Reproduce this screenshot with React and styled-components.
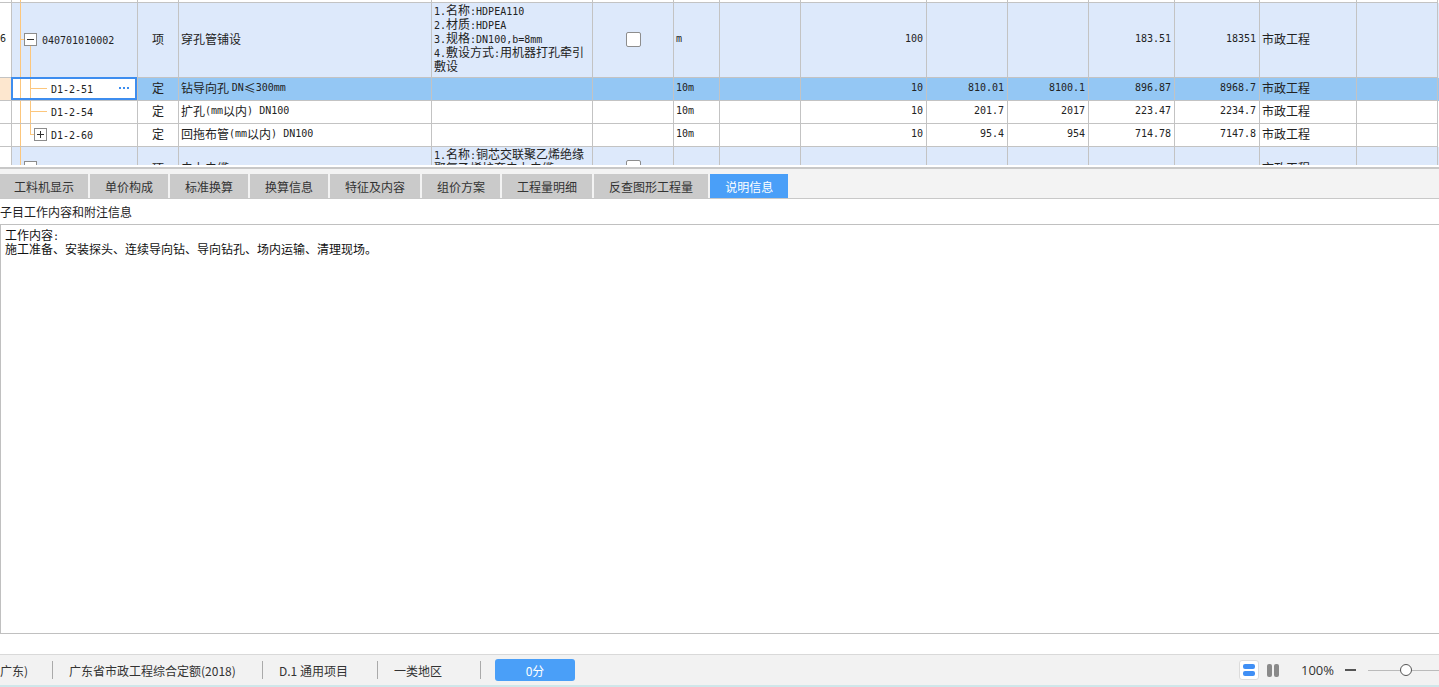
import React from 'react';
import styled, { createGlobalStyle } from 'styled-components';

const GlobalStyle = createGlobalStyle`
  html, body {
    margin: 0;
    padding: 0;
    background: #fff;
    overflow: hidden;
  }
  body {
    font-family: "Noto Sans CJK SC", "Noto Sans", sans-serif;
    font-size: 12px;
    color: #222;
  }
`;

const LINE = '#c3c3c3';
const ORANGE = '#fcc67c';
const BLUE = '#4a9ff8';
const COLS = '12px 126px 41px 253px 161px 81px 46px 81px 126px 81px 81px 86px 85px 97px 81px';

const Page = styled.div`
  width: 1439px;
  height: 687px;
  display: flex;
  flex-direction: column;
`;

const GridViewport = styled.div`
  height: 165px;
  overflow: hidden;
  flex: none;
`;

const Row = styled.div`
  display: grid;
  grid-template-columns: ${COLS};
  height: ${(p) => p.$h}px;
  background: ${(p) => p.$bg || '#fff'};
`;

const Cell = styled.div`
  position: relative;
  box-sizing: border-box;
  border-right: 1px solid ${LINE};
  border-bottom: 1px solid ${LINE};
  display: flex;
  align-items: center;
  justify-content: ${(p) => p.$align || 'flex-start'};
  padding: 0 ${(p) => (p.$align === 'flex-end' ? '3px' : '2px')} 2px;
  white-space: pre;
  overflow: hidden;
  background: ${(p) => p.$bg || 'transparent'};
  line-height: 14px;
`;

const NoCell = styled(Cell)`
  padding: 0 0 2px;
  justify-content: flex-start;
`;

const TreeCell = styled(Cell)`
  overflow: visible;
  padding-left: ${(p) => p.$indent}px;
  padding-right: 0;
  &::after {
    content: '';
    display: ${(p) => (p.$focus ? 'block' : 'none')};
    position: absolute;
    top: -1px;
    left: -1px;
    right: 0;
    bottom: 0;
    border: 2px solid #3d8def;
    pointer-events: none;
  }
`;

const DescCell = styled(Cell)`
  align-items: flex-start;
  flex-direction: column;
  justify-content: flex-start;
  padding: 0 2px;
`;

const DescLine = styled.div`
  height: 14px;
  line-height: 14px;
  white-space: nowrap;
`;

const Guide = styled.svg`
  position: absolute;
  left: 0;
  top: 0;
  pointer-events: none;
`;

const CellText = styled.span`
  position: relative;
`;

const Latin = styled.span`
  font-family: "DejaVu Sans Mono", "Liberation Mono", monospace;
  font-size: 10px;
  line-height: 10px;
`;

const MoreDots = styled.span`
  position: relative;
  margin-left: auto;
  margin-right: 8px;
  display: flex;
  gap: 2px;
  span {
    width: 2px;
    height: 2px;
    background: #3d8def;
  }
`;

const Check = styled.span`
  width: 13px;
  height: 13px;
  border: 1px solid #8d8d8d;
  border-radius: 2px;
  background: #fff;
`;

const Splitter = styled.div`
  flex: none;
  height: 2px;
  border-top: 2px solid #fff;
  background: #c8c8c8;
`;

const TabBar = styled.div`
  flex: none;
  height: 29px;
  border-bottom: 1px solid #c8c8c8;
  background: #f3f3f3;
  display: flex;
  align-items: flex-end;
  gap: 2px;
`;

const Tab = styled.div`
  height: 24px;
  padding: 0 ${(p) => (p.$first ? 14 : 15)}px;
  display: flex;
  align-items: center;
  font-size: 12px;
  color: ${(p) => (p.$active ? '#fff' : '#333')};
  background: ${(p) => (p.$active ? BLUE : '#cacaca')};
`;

const Caption = styled.div`
  flex: none;
  height: 25px;
  display: flex;
  align-items: center;
  font-size: 12px;
  color: #222;
`;

const NoteBox = styled.div`
  flex: none;
  height: 410px;
  box-sizing: border-box;
  border: 1px solid #c0c0c0;
  border-right: none;
  padding: 3px 4px;
  line-height: 14px;
  font-size: 12px;
  color: #111;
`;

const Gap = styled.div`
  flex: none;
  height: 20px;
`;

const StatusBar = styled.div`
  flex: none;
  height: 30px;
  border-top: 1px solid #d9d9d9;
  border-bottom: 2px solid #cfe7ea;
  background: #f2f2f2;
  display: flex;
  align-items: center;
  font-size: 12px;
  color: #333;
`;

const StatusItem = styled.div`
  width: ${(p) => p.$w}px;
  padding-left: ${(p) => (p.$first ? 0 : 16)}px;
  box-sizing: border-box;
  white-space: nowrap;
`;

const StatusSep = styled.div`
  width: 1px;
  height: 18px;
  background: #aaa;
`;

const ScoreButton = styled.div`
  margin-left: 14px;
  width: 80px;
  height: 22px;
  border-radius: 3px;
  background: ${BLUE};
  color: #fff;
  display: flex;
  align-items: center;
  justify-content: center;
`;

const StatusRight = styled.div`
  margin-left: auto;
  display: flex;
  align-items: center;
`;

const ViewToggle = styled.div`
  width: 20px;
  height: 20px;
  box-sizing: border-box;
  border: 1px solid #dcdcdc;
  border-radius: 3px;
  background: #fff;
  display: flex;
  flex-direction: column;
  align-items: center;
  justify-content: center;
  gap: 2px;
  span {
    width: 12px;
    height: 5px;
    border-radius: 2px;
    background: #3f8ff5;
  }
`;

const SplitIcon = styled.div`
  margin-left: 8px;
  width: 15px;
  display: flex;
  gap: 2px;
  span {
    width: 5px;
    height: 13px;
    border-radius: 2px;
    background: #8a8a8a;
  }
`;

const Zoom = styled.div`
  margin-left: 19px;
  font-family: "Open Sans", "Noto Sans", sans-serif;
  font-size: 13px;
  color: #333;
`;

const Minus = styled.div`
  margin-left: 11px;
  width: 11px;
  height: 2px;
  background: #555;
`;

const Slider = styled.div`
  position: relative;
  margin-left: 12px;
  width: 71px;
  height: 14px;
  &::before {
    content: '';
    position: absolute;
    left: 0;
    right: 0;
    top: 7px;
    height: 1px;
    background: #bbb;
  }
`;

const Knob = styled.span`
  position: absolute;
  left: 32px;
  top: 1px;
  width: 12px;
  height: 12px;
  box-sizing: border-box;
  border: 1.5px solid #555;
  border-radius: 50%;
  background: #fff;
`;

function Mixed({ text }) {
  return text.split(/([\x20-\x7e]+)/).map((part, i) =>
    /[\x20-\x7e]/.test(part) ? <Latin key={i}>{part}</Latin> : part
  );
}

function TreeGuide({ kind, h }) {
  const c = Math.floor(h / 2) - 0.5;
  const box = (x, plus) => (
    <>
      <rect x={x + 0.5} y={c - 6} width="12" height="12" fill="#fff" stroke="#8c8c8c" />
      <line x1={x + 3} y1={c} x2={x + 10} y2={c} stroke="#333" />
      {plus && <line x1={x + 6.5} y1={c - 3.5} x2={x + 6.5} y2={c + 3.5} stroke="#333" />}
    </>
  );
  return (
    <Guide width="126" height={h} viewBox={`0 0 126 ${h}`} shapeRendering="crispEdges">
      <line x1="8.5" y1="0" x2="8.5" y2={h} stroke={ORANGE} />
      {kind === 'parent' && (
        <>
          <line x1="8.5" y1={c} x2="12" y2={c} stroke={ORANGE} />
          <line x1="18.5" y1={c + 6} x2="18.5" y2={h} stroke={ORANGE} />
          {box(12)}
        </>
      )}
      {kind === 'closed' && (
        <>
          <line x1="8.5" y1={c} x2="12" y2={c} stroke={ORANGE} />
          {box(12)}
        </>
      )}
      {kind === 'child' && (
        <>
          <line x1="18.5" y1="0" x2="18.5" y2={h} stroke={ORANGE} />
          <line x1="18.5" y1={c} x2="35" y2={c} stroke={ORANGE} />
        </>
      )}
      {kind === 'last' && (
        <>
          <line x1="18.5" y1="0" x2="18.5" y2={c} stroke={ORANGE} />
          <line x1="18.5" y1={c} x2="22" y2={c} stroke={ORANGE} />
          {box(22, true)}
        </>
      )}
    </Guide>
  );
}

const items = [
  {
    kind: 'parent', no: '6', code: '040701010002', type: '项', name: '穿孔管铺设',
    desc: ['1.名称:HDPEA110', '2.材质:HDPEA', '3.规格:DN100,b=8mm', '4.敷设方式:用机器打孔牵引', '敷设'],
    check: true, unit: 'm', qty: '100', p1: '', t1: '', price: '183.51', total: '18351',
    spec: '市政工程', h: 75, bg: '#dde9fb',
  },
  {
    kind: 'child', code: 'D1-2-51', type: '定', name: '钻导向孔\u00a0DN≤300mm', unit: '10m', qty: '10',
    p1: '810.01', t1: '8100.1', price: '896.87', total: '8968.7', spec: '市政工程', h: 23,
    bg: '#94c7f4', focus: true,
  },
  {
    kind: 'child', code: 'D1-2-54', type: '定', name: '扩孔(mm以内) DN100', unit: '10m', qty: '10',
    p1: '201.7', t1: '2017', price: '223.47', total: '2234.7', spec: '市政工程', h: 23,
  },
  {
    kind: 'last', code: 'D1-2-60', type: '定', name: '回拖布管(mm以内) DN100', unit: '10m', qty: '10',
    p1: '95.4', t1: '954', price: '714.78', total: '7147.8', spec: '市政工程', h: 23,
  },
  {
    kind: 'closed', code: '', type: '项', name: '电力电缆',
    desc: ['1.名称:铜芯交联聚乙烯绝缘', '聚氯乙烯护套电力电缆'],
    check: true, unit: 'm', qty: '', p1: '', t1: '', price: '', total: '',
    spec: '市政工程', h: 44, bg: '#dde9fb',
  },
];

const tabs = ['工料机显示', '单价构成', '标准换算', '换算信息', '特征及内容', '组价方案', '工程量明细', '反查图形工程量', '说明信息'];

function GridRow({ item }) {
  const inner = item.h - 1;
  return (
    <Row $h={item.h} $bg={item.bg}>
      <NoCell $bg={item.focus ? '#fde7cf' : '#fff'}>{item.no && <Mixed text={item.no} />}</NoCell>
      <TreeCell $indent={item.kind === 'child' || item.kind === 'last' ? 39 : 30} $focus={item.focus} $bg={item.focus ? '#fff' : undefined}>
        <TreeGuide kind={item.kind} h={inner} />
        <CellText><Mixed text={item.code} /></CellText>
        {item.focus && (
          <MoreDots><span /><span /><span /></MoreDots>
        )}
      </TreeCell>
      <Cell $align="center">{item.type}</Cell>
      <Cell><Mixed text={item.name} /></Cell>
      <DescCell>
        {(item.desc || []).map((l) => (
          <DescLine key={l}><Mixed text={l} /></DescLine>
        ))}
      </DescCell>
      <Cell $align="center">{item.check && <Check />}</Cell>
      <Cell><Mixed text={item.unit} /></Cell>
      <Cell />
      <Cell $align="flex-end"><Mixed text={item.qty} /></Cell>
      <Cell $align="flex-end"><Mixed text={item.p1} /></Cell>
      <Cell $align="flex-end"><Mixed text={item.t1} /></Cell>
      <Cell $align="flex-end"><Mixed text={item.price} /></Cell>
      <Cell $align="flex-end"><Mixed text={item.total} /></Cell>
      <Cell>{item.spec}</Cell>
      <Cell />
    </Row>
  );
}

export default function App() {
  return (
    <Page>
      <GlobalStyle />
      <GridViewport>
        <Row $h={3}>
          <NoCell />
          <TreeCell $indent={30}>
            <TreeGuide kind="top" h={2} />
          </TreeCell>
          {Array.from({ length: 13 }).map((_, i) => <Cell key={i} />)}
        </Row>
        {items.map((item, i) => <GridRow key={i} item={item} />)}
      </GridViewport>
      <Splitter />
      <TabBar>
        {tabs.map((t, i) => (
          <Tab key={t} $first={i === 0} $active={t === '说明信息'}>{t}</Tab>
        ))}
      </TabBar>
      <Caption>子目工作内容和附注信息</Caption>
      <NoteBox>
        <div><Mixed text="工作内容:" /></div>
        <div>施工准备、安装探头、连续导向钻、导向钻孔、场内运输、清理现场。</div>
      </NoteBox>
      <Gap />
      <StatusBar>
        <StatusItem $first $w={52}>广东)</StatusItem>
        <StatusSep />
        <StatusItem $w={209}>广东省市政工程综合定额(2018)</StatusItem>
        <StatusSep />
        <StatusItem $w={114}>D.1 通用项目</StatusItem>
        <StatusSep />
        <StatusItem $w={102}>一类地区</StatusItem>
        <StatusSep />
        <ScoreButton>0分</ScoreButton>
        <StatusRight>
          <ViewToggle><span /><span /></ViewToggle>
          <SplitIcon><span /><span /></SplitIcon>
          <Zoom>100%</Zoom>
          <Minus />
          <Slider><Knob /></Slider>
        </StatusRight>
      </StatusBar>
    </Page>
  );
}
